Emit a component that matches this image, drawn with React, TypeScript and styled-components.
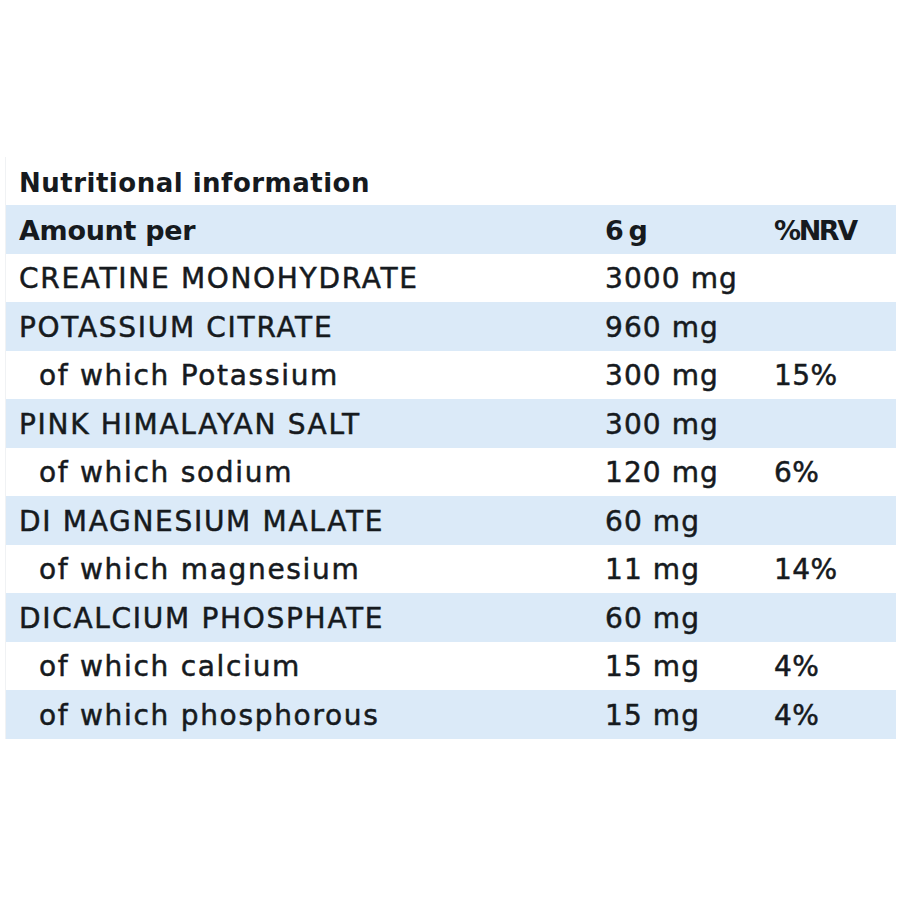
import React from "react";
import styled, { createGlobalStyle } from "styled-components";

const Global = createGlobalStyle`
  html, body { margin: 0; padding: 0; background: #ffffff; }
  body { font-family: "DejaVu Sans", "Noto Sans", sans-serif; color: #161a1e; }
`;

const Page = styled.div`
  width: 900px;
  height: 900px;
  padding-top: 157px;
  box-sizing: border-box;
`;

const Table = styled.div`
  margin-left: 5px;
  width: 890px;
  border-left: 1px solid #f0f2f4;
`;

const Title = styled.div`
  height: 48px;
  display: flex;
  align-items: center;
  padding: 3px 0 0 13px;
  box-sizing: border-box;
  font-size: 26px;
  font-weight: 700;
  letter-spacing: 0.5px;
`;

const Row = styled.div<{ $striped: boolean }>`
  display: grid;
  grid-template-columns: 586px 169px 1fr;
  align-items: center;
  height: 48.5px;
  padding: 2px 0 0 13px;
  box-sizing: border-box;
  background: ${(p) => (p.$striped ? "#dbeaf8" : "#ffffff")};
  font-size: 28px;
`;

const Label = styled.span<{ $indent?: boolean; $bold?: boolean }>`
  padding-left: ${(p) => (p.$indent ? "20px" : "0")};
  font-weight: ${(p) => (p.$bold ? 700 : 400)};
  font-size: ${(p) => (p.$bold ? "27px" : "28px")};
  letter-spacing: ${(p) => (p.$bold ? "-0.3px" : "1.7px")};
  -webkit-text-stroke: ${(p) => (p.$bold ? "0" : "0.5px currentColor")};
  white-space: nowrap;
`;

const Cell = styled.span<{ $bold?: boolean; $tight?: boolean }>`
  font-weight: ${(p) => (p.$bold ? 700 : 400)};
  font-size: ${(p) => (p.$bold ? "27px" : "28px")};
  letter-spacing: ${(p) => (p.$bold ? "-2.4px" : p.$tight ? "0.4px" : "1.1px")};
  -webkit-text-stroke: ${(p) => (p.$bold ? "0" : "0.5px currentColor")};
  white-space: nowrap;
`;

const rows: { label: string; value: string; nrv: string; indent?: boolean; bold?: boolean }[] = [
  { label: "Amount per", value: "6 g", nrv: "%NRV", bold: true },
  { label: "CREATINE MONOHYDRATE", value: "3000 mg", nrv: "" },
  { label: "POTASSIUM CITRATE", value: "960 mg", nrv: "" },
  { label: "of which Potassium", value: "300 mg", nrv: "15%", indent: true },
  { label: "PINK HIMALAYAN SALT", value: "300 mg", nrv: "" },
  { label: "of which sodium", value: "120 mg", nrv: "6%", indent: true },
  { label: "DI MAGNESIUM MALATE", value: "60 mg", nrv: "" },
  { label: "of which magnesium", value: "11 mg", nrv: "14%", indent: true },
  { label: "DICALCIUM PHOSPHATE", value: "60 mg", nrv: "" },
  { label: "of which calcium", value: "15 mg", nrv: "4%", indent: true },
  { label: "of which phosphorous", value: "15 mg", nrv: "4%", indent: true },
];

export default function App() {
  return (
    <>
      <Global />
      <Page>
        <Table>
          <Title>Nutritional information</Title>
          {rows.map((r, i) => (
            <Row key={i} $striped={i % 2 === 0}>
              <Label $indent={r.indent} $bold={r.bold}>{r.label}</Label>
              <Cell $bold={r.bold}>{r.value}</Cell>
              <Cell $bold={r.bold} $tight>{r.nrv}</Cell>
            </Row>
          ))}
        </Table>
      </Page>
    </>
  );
}
